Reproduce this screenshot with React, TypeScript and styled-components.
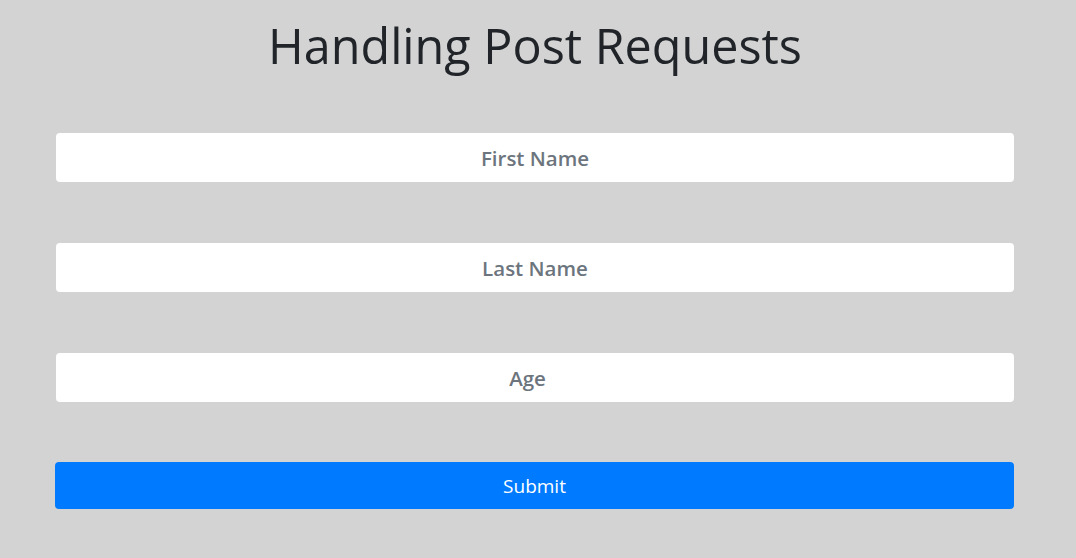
import styled, { createGlobalStyle } from 'styled-components';

const GlobalStyle = createGlobalStyle`
  html, body {
    margin: 0;
    padding: 0;
    background: #d3d3d3;
    font-family: "Open Sans", "Noto Sans", "Liberation Sans", sans-serif;
  }
`;

const Page = styled.div`
  width: 958px;
  margin-left: 56px;
  padding-top: 10px;
`;

const Title = styled.h1`
  margin: 0 0 53px;
  text-align: center;
  font-size: 48.5px;
  font-weight: 500;
  line-height: 70px;
  color: #212529;
`;

const Form = styled.form`
  display: flex;
  flex-direction: column;
  gap: 61px;
`;

const Field = styled.input`
  box-sizing: border-box;
  width: 100%;
  height: 49px;
  border: none;
  border-radius: 4px;
  background: #fff;
  text-align: center;
  font-family: inherit;
  font-size: 20.5px;
  font-weight: 600;
  color: #495057;
  outline: none;

  &::placeholder {
    color: #6c757d;
    opacity: 1;
  }
`;

const SubmitButton = styled.button`
  box-sizing: border-box;
  width: 959px;
  height: 47px;
  margin: -1px 0 0 -1px;
  border: none;
  border-radius: 4px;
  background: #007bff;
  color: #fff;
  font-family: inherit;
  font-size: 19px;
  cursor: pointer;
`;

function App() {
  return (
    <>
      <GlobalStyle />
      <Page>
        <Title>Handling Post Requests</Title>
        <Form onSubmit={(e) => e.preventDefault()}>
          <Field type="text" placeholder="First Name" />
          <Field type="text" placeholder="Last Name" />
          <Field type="number" placeholder="Age" />
          <SubmitButton type="submit">Submit</SubmitButton>
        </Form>
      </Page>
    </>
  );
}

export default App;
